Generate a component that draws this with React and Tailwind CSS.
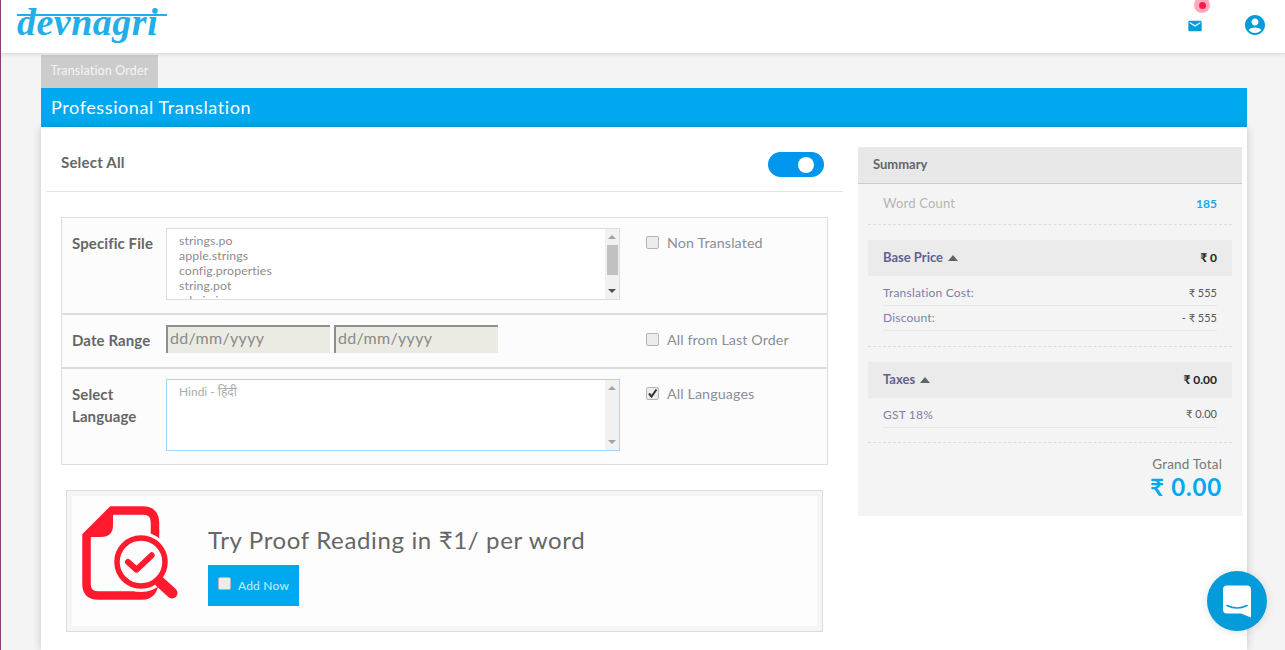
const Scrollbar = ({ thumb, muted }) => (
  <div className="w-[14px] h-full flex flex-col items-center bg-[#f1f1f1] shrink-0">
    <svg width="8" height="16" viewBox="0 0 8 16" className="shrink-0"><path d="M0 10 4 6 8 10z" fill="#a3a3a3" /></svg>
    <div className="flex-1 w-full">
      {thumb && <div className="w-[11px] h-[30px] mx-auto bg-[#c1c1c1]" />}
    </div>
    <svg width="8" height="16" viewBox="0 0 8 16" className="shrink-0"><path d="M0 6 4 10 8 6z" fill={muted ? '#a3a3a3' : '#505050'} /></svg>
  </div>
);

const CheckBox = ({ checked }) => (
  <span className="w-[13px] h-[13px] rounded-[2px] border border-[#b5b5b5] bg-[#ececec] flex items-center justify-center shrink-0">
    {checked && (
      <svg width="11" height="11" viewBox="0 0 11 11"><path d="M2 5.500 4.500 8.500 9.500 1.500" fill="none" stroke="#333" strokeWidth="2" /></svg>
    )}
  </span>
);

const SideOption = ({ label, checked }) => (
  <div className="w-[208px] pl-[26px] pt-[15px] flex items-start gap-[8px] text-[14.300px] text-[#8a8f98] shrink-0">
    <span className="mt-[3px]"><CheckBox checked={checked} /></span>
    <span className="leading-[20px] tracking-[0.1px]">{label}</span>
  </div>
);

const DateBox = () => (
  <div className="w-[164px] h-[28px] bg-[#ebebe4] border-t-2 border-l-2 border-t-[#8f8f8f] border-l-[#8f8f8f] pl-[2px] text-[16px] leading-[22px] text-[#8a8a8a] tracking-[0.3px]">
    dd/mm/yyyy
  </div>
);

const Caret = () => (
  <svg width="10" height="6" viewBox="0 0 10 6"><path d="M0 6 5 0 10 6z" fill="#5f6468" /></svg>
);

const PriceHead = ({ label, value }) => (
  <div className="h-[36px] mx-[10px] pl-[15px] pr-[15px] bg-[#ebebeb] flex items-center justify-between">
    <span className="flex items-center gap-[5px] text-[13px] font-bold text-[#5f6390]">{label} <Caret /></span>
    <span className="text-[12px] font-bold text-[#222]">{value}</span>
  </div>
);

const PriceLine = ({ label, value, h }) => (
  <div className={`mx-[25px] flex items-center justify-between border-b border-[#e8e8e8] text-[12px] text-[#7c80a8] ${h}`}>
    <span className="tracking-[0.2px]">{label}</span>
    <span className="text-[#555] text-[11px]">{value}</span>
  </div>
);

const ProofIcon = () => (
  <svg width="97" height="95" viewBox="0 0 97 95">
    <path d="M4.500 30 30 4.500H61Q73 4.500 73 17V60H73V70Q73 89.500 60 89.500H16Q4.500 89.500 4.500 78Z" fill="none" stroke="#ff1a2d" strokeWidth="8.500" />
    <path d="M5 27 27 4H31V19Q31 31 19 31H5Z" fill="#ff1a2d" />
    <circle cx="59" cy="56" r="30" fill="#fdfdfd" />
    <circle cx="59" cy="56" r="24" fill="none" stroke="#ff1a2d" strokeWidth="5.500" />
    <path d="M46 56 54.600 63.700 69.700 49.300" fill="none" stroke="#ff1a2d" strokeWidth="6" strokeLinecap="round" strokeLinejoin="round" />
    <path d="M78 76 90 87" fill="none" stroke="#ff1a2d" strokeWidth="11" strokeLinecap="round" />
  </svg>
);

const App = () => {
  const files = ['strings.po', 'apple.strings', 'config.properties', 'string.pot', 'admin.json'];

  return (
    <div className="relative h-screen overflow-hidden flex flex-col bg-[#f4f4f4] border-l border-l-[#8a3f78] font-['Lato','Open_Sans',sans-serif] text-[#666]">
      {/* Top bar */}
      <header className="relative z-10 h-[53px] shrink-0 bg-white shadow-[0_1px_4px_rgba(0,0,0,0.15)] flex items-start justify-between">
        <div className="ml-[16px] w-[150px] h-[44px] flex flex-col">
          <span className="mt-[14px] h-[2px] bg-[#23ade9] shrink-0" />
          <span className="-mt-[16px] font-['Liberation_Serif',serif] italic font-bold text-[38px] leading-[44px] tracking-[0.5px] text-[#23ade9]">devnagri</span>
        </div>
        <div className="flex items-start">
          <div className="relative mt-[18px] mr-[40px] w-[16px] h-[16px]">
            <svg width="16" height="16" viewBox="0 0 24 24" fill="#039bd9"><path d="M20 4H4c-1.100 0-2 .9-2 2v12c0 1.100.9 2 2 2h16c1.100 0 2-.9 2-2V6c0-1.100-.9-2-2-2zm0 4-8 5-8-5V6l8 5 8-5v2z" /></svg>
            <span className="absolute left-[7px] top-[-21px] w-[16px] h-[16px] rounded-full bg-[#ffa8bc] flex items-center justify-center">
              <span className="w-[7px] h-[7px] rounded-full bg-[#ff1a50]" />
            </span>
          </div>
          <svg className="mt-[13px] mr-[18px]" width="24" height="24" viewBox="0 0 24 24" fill="#039bd9"><path d="M12 2C6.480 2 2 6.480 2 12s4.480 10 10 10 10-4.480 10-10S17.520 2 12 2zm0 3.500c1.930 0 3.500 1.570 3.500 3.500S13.930 12.500 12 12.500 8.500 10.930 8.500 9 10.070 5.500 12 5.500zM12 20c-2.500 0-4.800-1.100-6.300-2.900.6-1.500 3.500-2.600 6.300-2.600s5.700 1.100 6.300 2.600C16.800 18.900 14.500 20 12 20z" /></svg>
        </div>
      </header>

      {/* Page */}
      <div className="pl-[40px] pr-[38px] flex-1 min-h-0 flex flex-col">
        <div className="mt-[2px] h-[33px] w-[117px] bg-[#cccccc] flex items-center justify-center text-[12.5px] text-[#f4f4f4] tracking-[0.15px] shrink-0">Translation Order</div>
        <div className="h-[39px] bg-[#00a8f0] pl-[10px] flex items-center text-[18px] text-white tracking-[0.6px] shrink-0">Professional Translation</div>

        <div className="flex-1 bg-white shadow-[0_0_8px_rgba(0,0,0,0.18)] flex items-start">
          {/* Left column */}
          <div className="w-[797px] ml-[5px] shrink-0">
            <div className="h-[65px] border-b border-[#e5e5e5] pl-[15px] pr-[19px] pt-[25px] flex items-start justify-between">
              <span className="-mt-[1px] text-[15px] font-bold leading-[22px] tracking-[0.2px]">Select All</span>
              <span className="w-[56px] h-[25px] rounded-full bg-[#0096ee] flex items-center pl-[30px]">
                <span className="w-[16px] h-[16px] rounded-full bg-white" />
              </span>
            </div>

            <div className="mt-[25px] ml-[15px] w-[767px] h-[248px] border border-[#dddddd] bg-[#fcfcfc] flex flex-col">
              <div className="h-[97px] flex items-start border-b-2 border-[#dddddd] shrink-0">
                <div className="w-[104px] pl-[10px] pt-[15px] text-[15px] font-bold leading-[20px] tracking-[0.1px] shrink-0">Specific File</div>
                <div className="mt-[10px] w-[454px] h-[72px] border border-[#dddddd] bg-white flex shrink-0">
                  <div className="flex-1 pl-[12px] pt-[4px] overflow-hidden text-[12.300px] leading-[15px] text-[#8d8d8d] tracking-[0.1px]">
                    {files.map((file) => <div key={file}>{file}</div>)}
                  </div>
                  <Scrollbar thumb />
                </div>
                <SideOption label="Non Translated" />
              </div>

              <div className="h-[54px] flex items-start border-b-2 border-[#dddddd] shrink-0">
                <div className="w-[104px] pl-[10px] pt-[15px] text-[15px] font-bold leading-[20px] tracking-[0.1px] shrink-0">Date Range</div>
                <div className="w-[454px] pt-[10px] flex gap-[4px] shrink-0">
                  <DateBox />
                  <DateBox />
                </div>
                <SideOption label="All from Last Order" />
              </div>

              <div className="flex-1 flex items-start">
                <div className="w-[104px] pl-[10px] pt-[14px] text-[15px] font-bold leading-[22px] tracking-[0.1px] shrink-0">Select<br />Language</div>
                <div className="mt-[10px] w-[454px] h-[72px] border border-[#9adcf8] bg-white flex shrink-0">
                  <div className="flex-1 pl-[12px] pt-[4px] text-[12px] leading-[15px] text-[#aaaaaa] font-['Lato','Noto_Sans',sans-serif]">Hindi - हिंदी</div>
                  <Scrollbar muted />
                </div>
                <SideOption label="All Languages" checked />
              </div>
            </div>

            <div className="mt-[25px] ml-[20px] w-[757px] h-[142px] border border-[#dddddd] bg-[#f5f5f5] p-[5px]">
              <div className="h-full bg-[#fdfdfd] pl-[10px] pt-[10px] flex items-start gap-[29px]">
                <ProofIcon />
                <div className="pt-[17px]">
                  <div className="text-[24px] leading-[34px] text-[#666] tracking-[0.65px]">Try Proof Reading in ₹1/ per word</div>
                  <div className="mt-[8px] w-[91px] h-[41px] bg-[#00a8f0] pl-[10px] pt-[12px] flex items-start gap-[7px] text-[12px] text-[#c8eeff] tracking-[0.2px]">
                    <CheckBox />
                    <span className="pt-[1px] leading-[16px]">Add Now</span>
                  </div>
                </div>
              </div>
            </div>
          </div>

          {/* Summary */}
          <aside className="ml-[15px] mt-[20px] w-[384px] h-[369px] bg-[#f4f4f4] shrink-0">
            <div className="h-[37px] bg-[#e8e8e8] border-b border-[#cccccc] pl-[15px] flex items-center text-[13px] font-bold text-[#666]">Summary</div>
            <div className="h-[41px] mx-[10px] pl-[15px] pr-[15px] border-b border-dashed border-[#dddddd] flex items-center justify-between text-[13px]">
              <span className="text-[#b5b5b5] tracking-[0.2px]">Word Count</span>
              <span className="font-bold text-[#1ca7f0] text-[12px]">185</span>
            </div>
            <div className="h-[15px]" />
            <PriceHead label="Base Price" value="₹ 0" />
            <div className="h-[5px]" />
            <PriceLine label="Translation Cost:" value="₹ 555" h="h-[25px]" />
            <PriceLine label="Discount:" value="- ₹ 555" h="h-[25px]" />
            <div className="mx-[10px] h-[16px] border-b border-dashed border-[#dddddd]" />
            <div className="h-[15px]" />
            <PriceHead label="Taxes" value="₹ 0.00" />
            <div className="h-[4px]" />
            <PriceLine label="GST 18%" value="₹ 0.00" h="h-[26px]" />
            <div className="mx-[10px] h-[15px] border-b border-dashed border-[#dddddd]" />
            <div className="pt-[13px] pr-[20px] text-right">
              <div className="text-[13.500px] leading-[17px] text-[#777] tracking-[0.15px]">Grand Total</div>
              <div className="text-[24px] leading-[28px] font-bold text-[#00a8f0] tracking-[0.8px]">₹ 0.00</div>
            </div>
          </aside>
        </div>
      </div>

      {/* Chat launcher */}
      <div className="absolute left-[1206px] top-[571px] w-[60px] h-[60px] rounded-full bg-[#039bd9] shadow-[0_1px_10px_rgba(0,0,0,0.12)] flex items-center justify-center">
        <svg width="28" height="33" viewBox="0 0 28 32">
          <path d="M4 0H24Q28 0 28 4V32L18 28H4Q0 28 0 24V4Q0 0 4 0Z" fill="white" />
          <path d="M4 20Q14 25 24 20" fill="none" stroke="#039bd9" strokeWidth="1.600" strokeLinecap="round" />
        </svg>
      </div>
    </div>
  );
};

export default App;
